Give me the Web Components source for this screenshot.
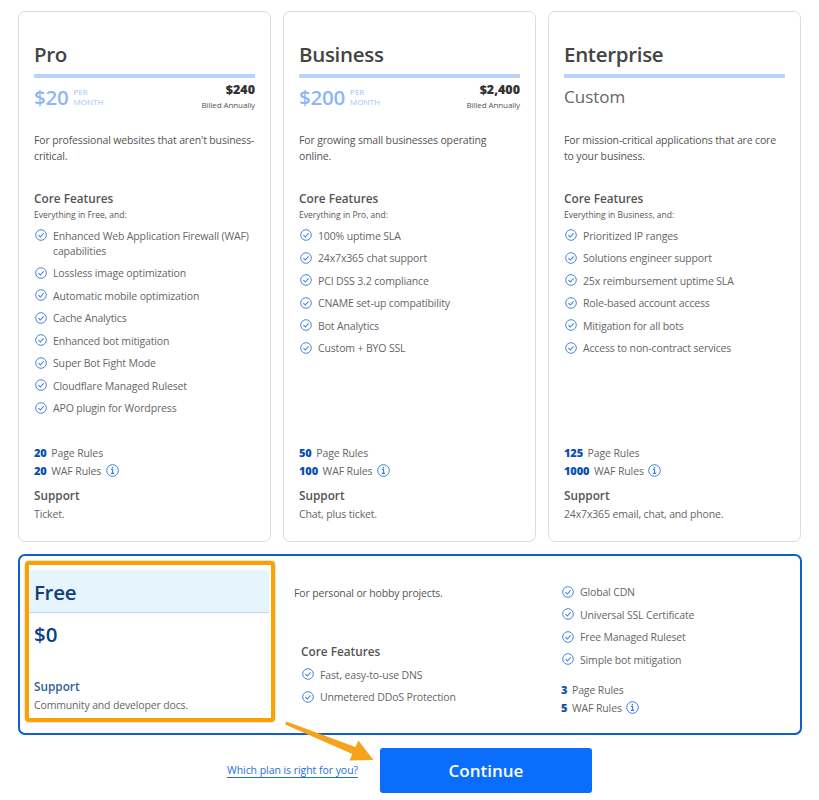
<!DOCTYPE html>
<html>
<head>
<meta charset="utf-8">
<title>Plans</title>
<style>
  html, body { margin: 0; background: #fff; }
  body { font-family: "Open Sans", "Noto Sans", sans-serif; color: #555; width: 819px; height: 800px; overflow: hidden; }
</style>
</head>
<body>
<plan-page>
  <plan-card name="Pro" price="$20" total="$240" limits="20,20" support="Ticket." intro="Everything in Free, and:">
    <span slot="desc">For professional websites that aren't business-critical.</span>
    <check-item>Enhanced Web Application Firewall (WAF) capabilities</check-item>
    <check-item>Lossless image optimization</check-item>
    <check-item>Automatic mobile optimization</check-item>
    <check-item>Cache Analytics</check-item>
    <check-item>Enhanced bot mitigation</check-item>
    <check-item>Super Bot Fight Mode</check-item>
    <check-item>Cloudflare Managed Ruleset</check-item>
    <check-item>APO plugin for Wordpress</check-item>
  </plan-card>
  <plan-card name="Business" price="$200" total="$2,400" limits="50,100" support="Chat, plus ticket." intro="Everything in Pro, and:">
    <span slot="desc">For growing small businesses operating online.</span>
    <check-item>100% uptime SLA</check-item>
    <check-item>24x7x365 chat support</check-item>
    <check-item>PCI DSS 3.2 compliance</check-item>
    <check-item>CNAME set-up compatibility</check-item>
    <check-item>Bot Analytics</check-item>
    <check-item>Custom + BYO SSL</check-item>
  </plan-card>
  <plan-card name="Enterprise" limits="125,1000" support="24x7x365 email, chat, and phone." intro="Everything in Business, and:">
    <span slot="desc">For mission-critical applications that are core to your business.</span>
    <check-item>Prioritized IP ranges</check-item>
    <check-item>Solutions engineer support</check-item>
    <check-item>25x reimbursement uptime SLA</check-item>
    <check-item>Role-based account access</check-item>
    <check-item>Mitigation for all bots</check-item>
    <check-item>Access to non-contract services</check-item>
  </plan-card>
  <free-plan slot="free">
    <check-item slot="core">Fast, easy-to-use DNS</check-item>
    <check-item slot="core">Unmetered DDoS Protection</check-item>
    <check-item>Global CDN</check-item>
    <check-item>Universal SSL Certificate</check-item>
    <check-item>Free Managed Ruleset</check-item>
    <check-item>Simple bot mitigation</check-item>
  </free-plan>
</plan-page>

<script>
const infoIcon = `<svg width="13" height="13" viewBox="0 0 13 13" fill="none" stroke="#3b7fd9" style="vertical-align:-2px">
  <circle cx="6.5" cy="6.5" r="5.8" stroke-width="1"/>
  <path d="M5 5.4h1.6v3.8M4.8 9.4h3.4" stroke-width="1.1"/><circle cx="6.4" cy="3.5" r=".8" fill="#3b7fd9" stroke="none"/>
</svg>`;

class LimitRows extends HTMLElement {
  constructor() {
    super();
    const shadow = this.attachShadow({ mode: 'open' });
    const page = this.getAttribute('page');
    const waf = this.getAttribute('waf');
    shadow.innerHTML = `
      <style>
        :host { display: block; font-size: 10.5px; letter-spacing: -0.12px; line-height: 18px; color: #666; }
        b { color: #0a4fb0; font-weight: 800; margin-right: 2px; font-size: 11px; }
        svg { margin-left: 2px; }
      </style>
      <div><b>${page}</b> Page Rules</div>
      <div><b>${waf}</b> WAF Rules ${infoIcon}</div>
    `;
  }
}
customElements.define('limit-rows', LimitRows);

class CheckItem extends HTMLElement {
  constructor() {
    super();
    const shadow = this.attachShadow({ mode: 'open' });
    shadow.innerHTML = `
      <style>
        :host { display: flex; gap: 6px; font-size: 10.5px; letter-spacing: -0.15px; line-height: 15.4px; color: #666; margin-bottom: 7.1px; padding-left: 1px; }
        svg { flex: none; margin-top: 0.5px; }
      </style>
      <svg width="12" height="12" viewBox="0 0 12 12" fill="none" stroke="#4a86d8">
        <circle cx="6" cy="6" r="5.3" stroke-width="1"/>
        <path d="M3.4 6.1l1.9 1.9 3.3-3.6" stroke-width="1.1"/>
      </svg>
      <span><slot></slot></span>
    `;
  }
}
customElements.define('check-item', CheckItem);

class PlanCard extends HTMLElement {
  constructor() {
    super();
    const shadow = this.attachShadow({ mode: 'open' });
    const price = this.getAttribute('price');
    const [page, waf] = this.getAttribute('limits').split(',');
    const priceRow = price ? `
      <div class="price">
        <span class="amount">${price}</span>
        <span class="per">PER<br>MONTH</span>
        <span class="total"><b>${this.getAttribute('total')}</b><br>Billed Annually</span>
      </div>` : `<div class="price"><span class="custom">Custom</span></div>`;
    shadow.innerHTML = `
      <style>
        :host { display: flex; flex-direction: column; box-sizing: border-box; width: 253px; height: 531px; padding: 28px 15px 0; border: 1px solid #dcdcdc; border-radius: 7px; background: #fff; }
        h2 { margin: 0; font-size: 20.5px; letter-spacing: -0.3px; line-height: 28px; font-weight: 600; color: #444; height: 34px; border-bottom: 4px solid #b5d3fb; }
        .price { display: flex; align-items: center; height: 38px; }
        .amount { font-size: 20.5px; font-weight: 600; letter-spacing: -0.2px; color: #8db6f5; }
        .per { font-size: 8px; line-height: 10px; color: #a3c3f3; margin-left: 5px; }
        .total { margin-left: auto; padding-top: 1px; text-align: right; font-size: 8px; letter-spacing: -0.1px; line-height: 14.5px; color: #555; }
        .total b { font-size: 12.5px; color: #333; font-weight: 800; letter-spacing: 0; }
        .custom { font-size: 17px; color: #666; padding-bottom: 2px; }
        .desc { font-size: 10.5px; letter-spacing: -0.15px; line-height: 16px; color: #555; margin-top: 16px; height: 32px; }
        h3 { margin: 25px 0 1px; font-size: 11.8px; line-height: 18px; font-weight: 600; color: #555; }
        .intro { font-size: 8.5px; line-height: 13px; color: #555; margin-bottom: 7.5px; }
        .bottom { margin-top: auto; padding-bottom: 18px; }
        .support { font-size: 11.8px; font-weight: 600; line-height: 18px; color: #555; margin: 6px 0 1px; }
        .note { font-size: 10.5px; letter-spacing: -0.15px; line-height: 18px; color: #666; }
      </style>
      <h2>${this.getAttribute('name')}</h2>
      ${priceRow}
      <div class="desc"><slot name="desc"></slot></div>
      <h3>Core Features</h3>
      <div class="intro">${this.getAttribute('intro')}</div>
      <slot></slot>
      <div class="bottom">
        <limit-rows page="${page}" waf="${waf}"></limit-rows>
        <div class="support">Support</div>
        <div class="note">${this.getAttribute('support')}</div>
      </div>
    `;
  }
}
customElements.define('plan-card', PlanCard);

class FreePlan extends HTMLElement {
  constructor() {
    super();
    const shadow = this.attachShadow({ mode: 'open' });
    shadow.innerHTML = `
      <style>
        :host { display: flex; box-sizing: border-box; width: 784px; height: 181px; border: 2px solid #0f5fc7; border-radius: 7px; padding: 5px; background: #fff; }
        .box { box-sizing: border-box; flex: none; width: 250px; height: 161px; border: 4px solid #f9a300; border-radius: 4px; padding: 5px 0 0; box-shadow: 0 0 2px #999; }
        .head { height: 42px; margin-right: 2px; background: #e6f4fb; border-bottom: 1px solid #bcd9f7; border-radius: 4px 4px 0 0; padding-left: 5px; font-size: 20.5px; letter-spacing: -0.3px; line-height: 44px; font-weight: 600; color: #0f3f82; }
        .amount { padding-left: 5px; font-size: 20.5px; line-height: 30px; font-weight: 600; color: #0f3f82; margin-top: 6px; }
        .support { padding-left: 5px; font-size: 11.8px; font-weight: 600; line-height: 18px; color: #2f5f9a; margin: 28px 0 1px; }
        .note { padding-left: 5px; font-size: 10.5px; letter-spacing: -0.15px; line-height: 18px; color: #666; }
        .mid { flex: none; width: 269px; padding: 24px 0 0 19px; box-sizing: border-box; }
        .lead { font-size: 10.5px; letter-spacing: -0.15px; line-height: 16px; color: #555; }
        h3 { margin: 41px 0 7.5px 7px; font-size: 11.8px; line-height: 18px; font-weight: 600; color: #555; }
        .core { padding-left: 7px; }
        .right { padding: 24px 0 0 17px; }
        limit-rows { margin-top: 13px; }
      </style>
      <div class="box">
        <div class="head">Free</div>
        <div class="amount">$0</div>
        <div class="support">Support</div>
        <div class="note">Community and developer docs.</div>
      </div>
      <div class="mid">
        <div class="lead">For personal or hobby projects.</div>
        <h3>Core Features</h3>
        <div class="core"><slot name="core"></slot></div>
      </div>
      <div class="right">
        <slot></slot>
        <limit-rows page="3" waf="5"></limit-rows>
      </div>
    `;
  }
}
customElements.define('free-plan', FreePlan);

class PlanPage extends HTMLElement {
  constructor() {
    super();
    const shadow = this.attachShadow({ mode: 'open' });
    shadow.innerHTML = `
      <style>
        :host { display: block; position: relative; padding: 11px 0 0 18px; }
        .cards { display: flex; gap: 12px; margin-bottom: 12px; }
        .foot { display: flex; align-items: center; margin: 13px 0 0 209px; }
        a { width: 153px; font-size: 10.5px; letter-spacing: -0.05px; line-height: 15px; color: #1d6fe0; text-decoration: underline; text-underline-offset: 3px; }
        button { width: 212px; height: 45px; border: 0; border-radius: 3px; background: #0a6dfc; color: #fff; font: 600 17px "Open Sans", "Noto Sans", sans-serif; }
        .arrow { position: absolute; left: 280px; top: 720px; }
      </style>
      <div class="cards"><slot></slot></div>
      <slot name="free"></slot>
      <div class="foot">
        <a href="#">Which plan is right for you?</a>
        <button>Continue</button>
      </div>
      <svg class="arrow" width="100" height="50" viewBox="0 0 100 50" fill="#f4a31a">
        <path d="M5 4.500l1.400-3 69 25.500 3-6.500 15 19.500-24 .5 3-6.500z"/>
      </svg>
    `;
  }
}
customElements.define('plan-page', PlanPage);
</script>
</body>
</html>
